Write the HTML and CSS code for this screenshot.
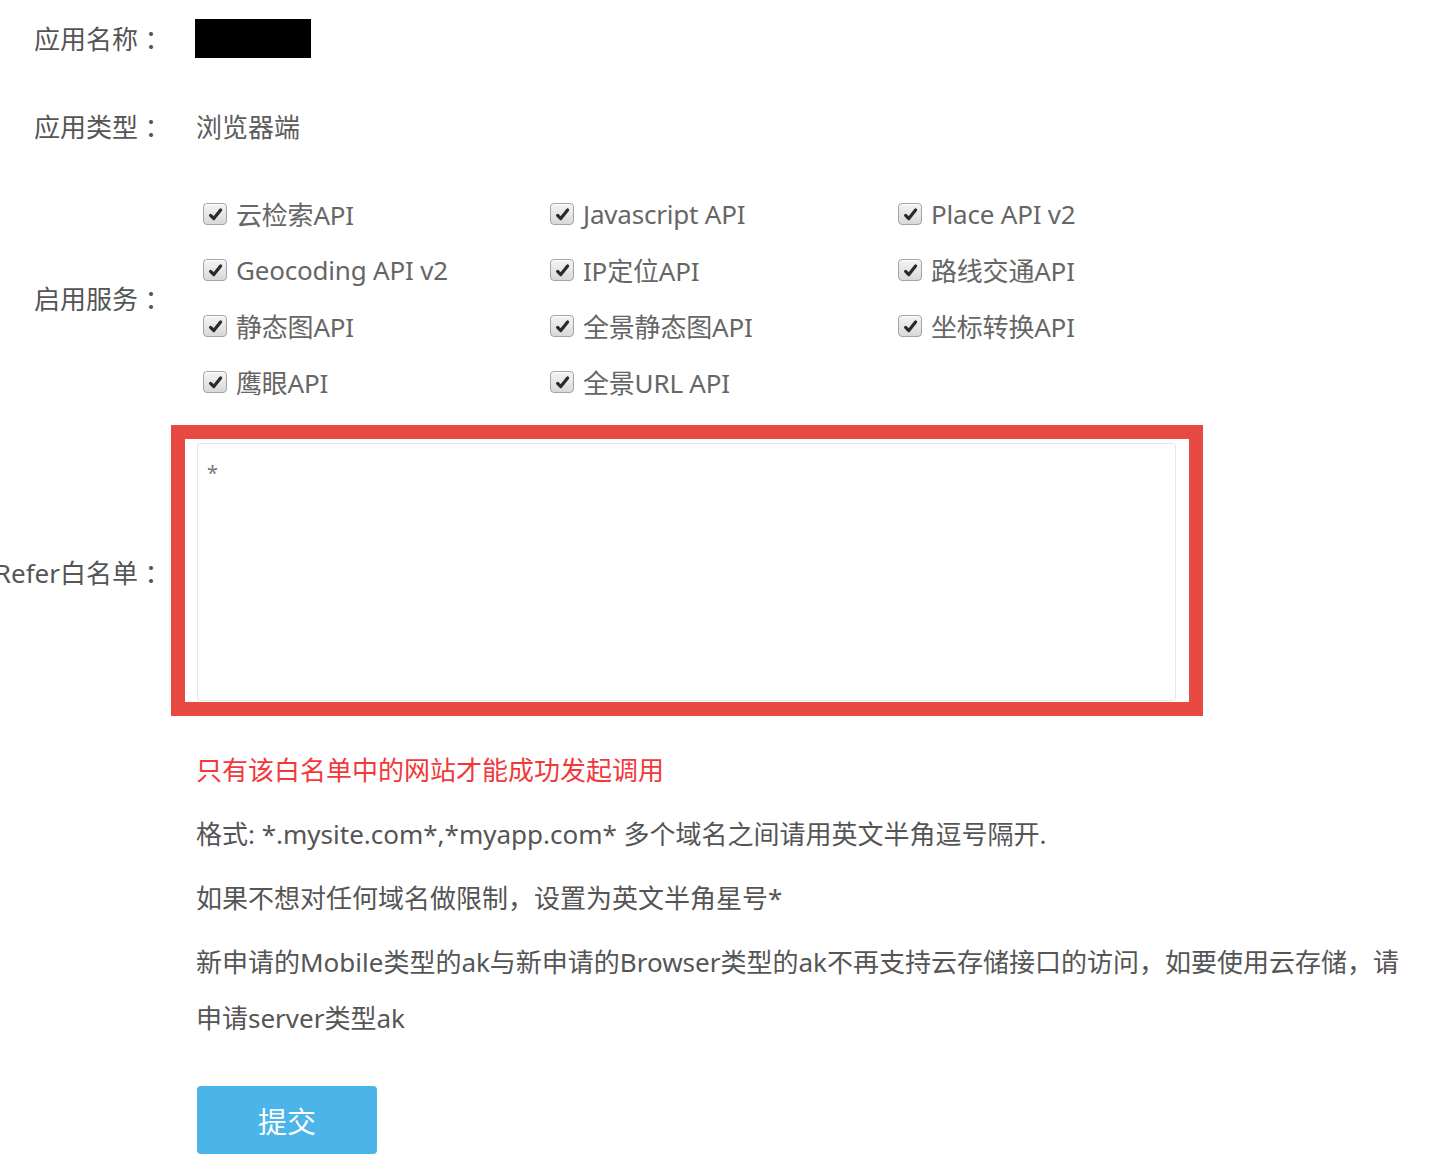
FILE: index.html
```html
<!DOCTYPE html>
<html lang="zh-CN">
<head>
<meta charset="utf-8">
<title>应用配置</title>
<link rel="stylesheet" href="styles.css">
</head>
<body>
<form class="form">
  <div class="row row-name">
    <div class="label">应用名称<span class="colon">：</span></div>
    <div class="value"><span class="redacted"></span></div>
  </div>
  <div class="row row-type">
    <div class="label">应用类型<span class="colon">：</span></div>
    <div class="value">浏览器端</div>
  </div>
  <div class="row row-services">
    <div class="label">启用服务<span class="colon">：</span></div>
    <div class="value services">
      <label class="svc"><span class="cb"><svg viewBox="0 0 16 16"><path d="M3.4 8.8 L6.4 11.8 L12.8 3.8" /></svg></span>云检索API</label>
      <label class="svc"><span class="cb"><svg viewBox="0 0 16 16"><path d="M3.4 8.8 L6.4 11.8 L12.8 3.8" /></svg></span>Javascript API</label>
      <label class="svc"><span class="cb"><svg viewBox="0 0 16 16"><path d="M3.4 8.8 L6.4 11.8 L12.8 3.8" /></svg></span>Place API v2</label>
      <label class="svc"><span class="cb"><svg viewBox="0 0 16 16"><path d="M3.4 8.8 L6.4 11.8 L12.8 3.8" /></svg></span>Geocoding API v2</label>
      <label class="svc"><span class="cb"><svg viewBox="0 0 16 16"><path d="M3.4 8.8 L6.4 11.8 L12.8 3.8" /></svg></span>IP定位API</label>
      <label class="svc"><span class="cb"><svg viewBox="0 0 16 16"><path d="M3.4 8.8 L6.4 11.8 L12.8 3.8" /></svg></span>路线交通API</label>
      <label class="svc"><span class="cb"><svg viewBox="0 0 16 16"><path d="M3.4 8.8 L6.4 11.8 L12.8 3.8" /></svg></span>静态图API</label>
      <label class="svc"><span class="cb"><svg viewBox="0 0 16 16"><path d="M3.4 8.8 L6.4 11.8 L12.8 3.8" /></svg></span>全景静态图API</label>
      <label class="svc"><span class="cb"><svg viewBox="0 0 16 16"><path d="M3.4 8.8 L6.4 11.8 L12.8 3.8" /></svg></span>坐标转换API</label>
      <label class="svc"><span class="cb"><svg viewBox="0 0 16 16"><path d="M3.4 8.8 L6.4 11.8 L12.8 3.8" /></svg></span>鹰眼API</label>
      <label class="svc"><span class="cb"><svg viewBox="0 0 16 16"><path d="M3.4 8.8 L6.4 11.8 L12.8 3.8" /></svg></span>全景URL API</label>
    </div>
  </div>
  <div class="row row-refer">
    <div class="label">Refer白名单<span class="colon">：</span></div>
    <div class="value refer">
      <div class="textarea">*</div>
      <div class="highlight"></div>
    </div>
  </div>
  <div class="row row-notes">
    <div class="label"></div>
    <div class="value notes">
      <p class="warn">只有该白名单中的网站才能成功发起调用</p>
      <p>格式: *.mysite.com*,*myapp.com* 多个域名之间请用英文半角逗号隔开.</p>
      <p>如果不想对任何域名做限制，设置为英文半角星号*</p>
      <p>新申请的Mobile类型的ak与新申请的Browser类型的ak不再支持云存储接口的访问，如要使用云存储，请申请server类型ak</p>
      <button type="button" class="submit">提交</button>
    </div>
  </div>
</form>
</body>
</html>
```

FILE: styles.css
```css
html, body {
  margin: 0;
  padding: 0;
  background: #ffffff;
}

body {
  font-family: "Noto Sans", "Noto Sans CJK SC", sans-serif;
  font-size: 26px;
  color: #555555;
  width: 1444px;
  overflow: hidden;
}

.form {
  display: flex;
  flex-direction: column;
}

.row {
  display: grid;
  grid-template-columns: 164px 1fr;
  column-gap: 32px;
}

.label {
  display: flex;
  justify-content: flex-end;
  align-items: center;
  white-space: nowrap;
  color: #555555;
}

.colon {
  font-family: "Noto Sans CJK TC", sans-serif;
  display: inline-block;
  width: 26px;
  text-align: center;
}

.value {
  display: flex;
  align-items: center;
  color: #5c5c5c;
}

.row-name {
  height: 76px;
}

.redacted {
  display: block;
  width: 116px;
  height: 39px;
  background: #000000;
  margin-left: -1px;
}

.row-type {
  margin-top: 12px;
  height: 76px;
}

.row-services {
  margin-top: 22px;
}

.services {
  display: grid;
  grid-template-columns: 347px 348px 348px;
  grid-auto-rows: 56px;
  align-items: center;
  width: 1043px;
}

.svc {
  display: flex;
  align-items: center;
  gap: 9px;
  padding-left: 7px;
  color: #666666;
  white-space: nowrap;
  letter-spacing: -0.2px;
}

.cb {
  width: 22px;
  height: 20px;
  border: 1px solid #a4a4a4;
  border-radius: 4px;
  background: linear-gradient(#f4f4f4, #d9d9d9);
  display: flex;
  align-items: center;
  justify-content: center;
  flex: none;
  box-shadow: inset 0 1px 0 #ffffff;
}

.cb svg {
  width: 17px;
  height: 17px;
  fill: none;
  stroke: #2a2a2a;
  stroke-width: 3;
  stroke-linecap: round;
  stroke-linejoin: round;
}

.row-refer {
  margin-top: 33px;
}

.refer {
  position: relative;
  display: block;
}

.textarea {
  width: 979px;
  height: 258px;
  margin-left: 1px;
  box-sizing: border-box;
  border: 1px solid #e4e7eb;
  border-radius: 3px;
  padding: 16px 9px;
  font-size: 20px;
  line-height: 26px;
  color: #777777;
  background: #ffffff;
}

.highlight {
  position: absolute;
  left: -25px;
  top: -18px;
  width: 1032px;
  height: 291px;
  box-sizing: border-box;
  border: 14px solid #e84a43;
  pointer-events: none;
}

.row-notes {
  margin-top: 41px;
}

.notes {
  display: flex;
  flex-direction: column;
  align-items: flex-start;
  width: 1220px;
}

.notes p {
  margin: 0 0 8px 0;
  line-height: 56px;
  color: #555555;
}

.notes p.warn {
  color: #f2383a;
}

.submit {
  margin-top: 32px;
  margin-left: 1px;
  width: 180px;
  height: 68px;
  border: none;
  border-radius: 4px;
  background: #4bb4e8;
  color: #ffffff;
  font-family: "Noto Sans CJK SC", sans-serif;
  font-size: 29px;
  cursor: pointer;
}
```
